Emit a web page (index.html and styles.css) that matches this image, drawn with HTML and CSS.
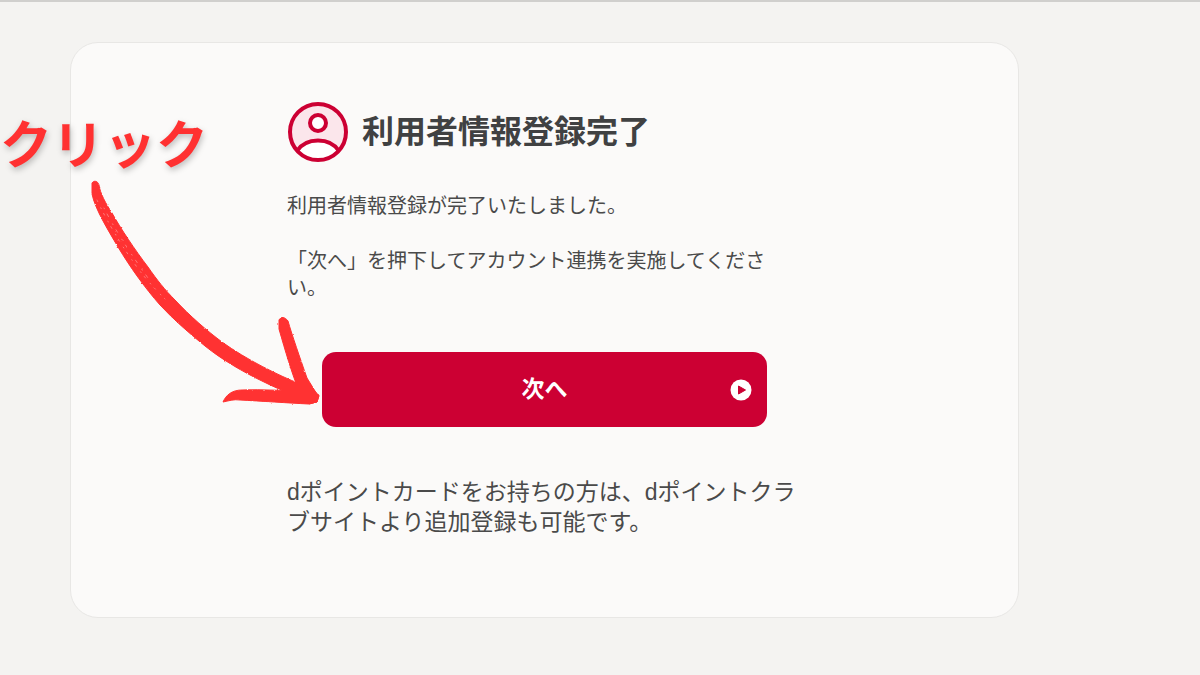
FILE: index.html
```html
<!DOCTYPE html>
<html lang="ja">
<head>
    <meta charset="UTF-8">
    <meta name="viewport" content="width=device-width, initial-scale=1">
    <title>利用者情報登録完了</title>
    <link rel="stylesheet" href="styles.css">
</head>
<body>
    <main class="card">
        <div class="content">
            <div class="title">
                <!-- 人物アイコン -->
                <svg class="title_icon" viewBox="0 0 62 62" aria-hidden="true">
                    <circle cx="31" cy="31" r="28" fill="#fbe6eb"/>
                    <path d="M11 49C19 36 43 36 51 49C41 62 21 62 11 49Z" fill="#fff"/>
                    <path d="M10 50C19 36 43 36 52 50" fill="none" stroke="#cc0033" stroke-width="4"/>
                    <circle cx="31" cy="22" r="8" fill="#fff" stroke="#cc0033" stroke-width="4"/>
                    <circle cx="31" cy="31" r="28" fill="none" stroke="#cc0033" stroke-width="4"/>
                </svg>
                <h1>利用者情報登録完了</h1>
            </div>
            <p class="text">利用者情報登録が完了いたしました。</p>
            <p class="text">「次へ」を押下してアカウント連携を実施してください。</p>
            <button type="button" class="next">
                <span>次へ</span>
                <svg class="next_icon" viewBox="0 0 22 22" aria-hidden="true">
                    <circle cx="11" cy="11" r="10.5" fill="#fff"/>
                    <path d="M8.5 7L15.5 11L8.5 15Z" fill="#cc0033" stroke="#cc0033" stroke-width="1" stroke-linejoin="round"/>
                </svg>
            </button>
            <p class="note">dポイントカードをお持ちの方は、dポイントクラブサイトより追加登録も可能です。</p>
        </div>
    </main>

    <!-- 画面に重ねる手書き風の案内 -->
    <div class="guide">クリック</div>
    <svg class="guide_arrow" viewBox="85 175 240 235" aria-hidden="true">
        <defs>
            <filter id="rough" x="-5%" y="-5%" width="110%" height="110%">
                <feTurbulence type="fractalNoise" baseFrequency="0.3" numOctaves="2" seed="4"/>
                <feDisplacementMap in="SourceGraphic" scale="2" xChannelSelector="R" yChannelSelector="G"/>
            </filter>
        </defs>
        <g filter="url(#rough)">
            <path fill="#ff3131" stroke="#ff3131" stroke-width="1" stroke-linejoin="round" d="M92 183C94 180 98 181 99 185C100 193 106 204 112 213C121 229 135 250 148 267C157 280 165 290 175 300C190 316 206 330 222 342C247 360 278 375 300 384L311 394L307 400C297 396 280 390 264 382C243 372 221 359 205 346C189 333 174 320 160 305C145 288 130 267 118 247C108 230 95 209 92 194Z"/>
            <path fill="#ff3131" stroke="#ff3131" stroke-width="1" stroke-linejoin="round" d="M279 320C281 316 285 317 288 321C292 335 300 358 307 378L315 391L319 396L317 402L309 404L299 391C292 374 285 350 279 329Z"/>
            <path fill="#ff3131" stroke="#ff3131" stroke-width="1" stroke-linejoin="round" d="M223 402C226 395 232 390 242 390C263 389 284 391 306 391L319 395L317 402L309 404C288 403 260 401 240 400C234 399 228 401 223 402Z"/>
            <g fill="none" stroke="#fbfaf9" stroke-width="1" stroke-linecap="round" opacity="0.35">
                <path stroke-dasharray="2 7 1 5" d="M97 200C104 215 117 239 132 260C142 275 153 287 165 299"/>
                <path stroke-dasharray="1 6 3 8" d="M104 208C114 228 130 253 148 278"/>
            </g>
        </g>
    </svg>
</body>
</html>
```
FILE: styles.css
```css
* {
    margin: 0;
    padding: 0;
    box-sizing: border-box;
}
body {
    min-height: 100vh;
    padding: 40px 181px 56px 70px;
    border-top: 2px solid #d0cfcd;
    background-color: #f4f3f1;
    color: #4a4a4a;
    font-family: "Liberation Sans", "Noto Sans CJK JP", sans-serif;
}
/* カード */
.card {
    padding: 58px 24px 80px;
    border: 1px solid #e8e7e5;
    border-radius: 28px;
    background-color: #fbfaf9;
}
.content {
    max-width: 515px;
    margin: 0 auto;
}
.title {
    display: flex;
    align-items: center;
    gap: 13px;
    margin-bottom: 30px;
}
.title_icon {
    flex: none;
    width: 62px;
    height: 62px;
}
.title h1 {
    color: #404142;
    font-size: 32px;
    line-height: 40px;
}
.text {
    margin-bottom: 28px;
    font-size: 20px;
    line-height: 27px;
}
/* 次へボタン */
.next {
    display: flex;
    align-items: center;
    justify-content: center;
    position: relative;
    width: calc(100% - 70px);
    margin: 50px auto;
    padding: 20px 48px;
    border: none;
    border-radius: 14px;
    background-color: #cc0033;
    color: #fff;
    font-family: inherit;
    font-size: 23px;
    font-weight: bold;
    line-height: 35px;
    cursor: pointer;
}
.next:hover {
    background-color: #b3002d;
}
.next_icon {
    position: absolute;
    right: 15px;
    width: 22px;
    height: 22px;
}
.note {
    font-size: 23px;
    line-height: 30px;
}
/* 案内の文字と矢印 */
.guide {
    position: absolute;
    top: 114px;
    left: 0;
    color: #ff3131;
    font-size: 52px;
    font-weight: bold;
    line-height: 64px;
    text-shadow: 1px 3px 6px rgba(0, 0, 0, 0.25);
}
.guide_arrow {
    position: absolute;
    top: 175px;
    left: 85px;
    width: 240px;
    height: 235px;
    pointer-events: none;
}
```
